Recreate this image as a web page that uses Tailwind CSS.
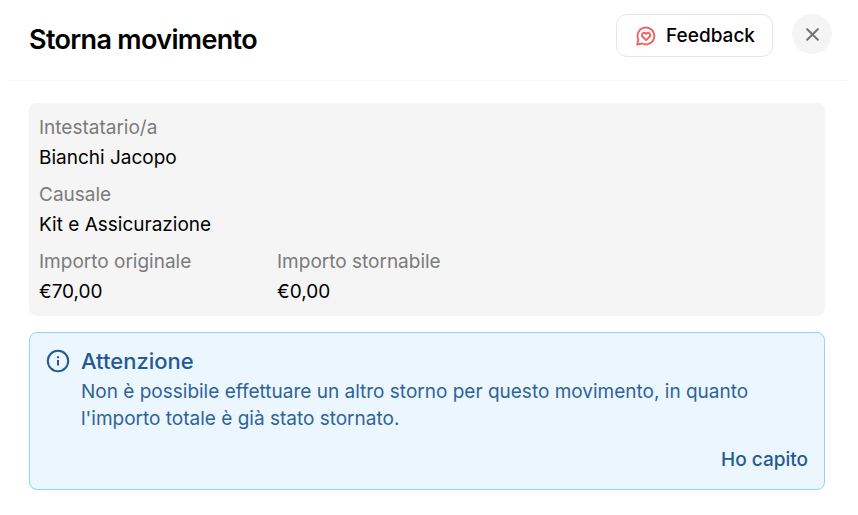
<!DOCTYPE html>
<html lang="it">
<head>
  <meta charset="UTF-8" />
  <title>Storna movimento</title>
  <meta name="viewport" content="width=device-width, initial-scale=1.0" />
  <script src="https://cdn.jsdelivr.net/npm/@tailwindcss/browser@4"></script>
</head>
<body class="bg-white text-black font-['Inter',sans-serif] text-[19px] leading-[27px]">

<main role="dialog" aria-labelledby="dialogTitle">
  <!-- Header -->
  <header class="mr-[11px] ml-2 flex h-[81px] items-start justify-between border-b border-neutral-100 pt-3.5 pr-[15px] pl-[21px]">
    <h1 id="dialogTitle" class="pt-2 text-[27px] leading-[36px] font-semibold tracking-tight">Storna movimento</h1>
    <div class="flex items-start gap-[19px]">
      <button type="button" class="flex h-[43px] items-center gap-[10px] rounded-[11px] border border-neutral-200 pr-[17px] pl-[19px] font-medium">
        <svg class="size-5 text-[#ee6363]" viewBox="0 0 20 20" fill="none" stroke="currentColor" stroke-width="1.9" stroke-linecap="round" stroke-linejoin="round" aria-hidden="true">
          <path d="M1.2 18.7l1.2-5A8.4 8.4 0 1 1 6.2 17.5z" />
          <path d="M10.1 14.1L6.6 10.7a2.2 2.2 0 0 1 3.1-3.2l.4.4.4-.4a2.2 2.2 0 0 1 3.1 3.2z" />
        </svg>
        Feedback
      </button>
      <button type="button" aria-label="Chiudi" class="flex size-10 items-center justify-center rounded-full bg-neutral-100 text-[#767676]">
        <svg class="size-[13px]" viewBox="0 0 13 13" fill="none" stroke="currentColor" stroke-width="2.1" stroke-linecap="round" aria-hidden="true">
          <path d="M1.2 1.2l10.6 10.6M11.8 1.2L1.2 11.8" />
        </svg>
      </button>
    </div>
  </header>

  <div class="flex flex-col gap-4 pt-[22px] pr-[33px] pb-6 pl-[29px]">
    <!-- Movement details -->
    <dl class="grid grid-cols-[228px_1fr] gap-2.5 rounded-lg bg-neutral-100 px-2.5 py-[11px]">
      <div class="col-span-2 flex flex-col gap-[3px]">
        <dt class="text-[#7b7b7b]">Intestatario/a</dt>
        <dd>Bianchi Jacopo</dd>
      </div>
      <div class="col-span-2 flex flex-col gap-[3px]">
        <dt class="text-[#7b7b7b]">Causale</dt>
        <dd>Kit e Assicurazione</dd>
      </div>
      <div class="flex flex-col gap-[3px]">
        <dt class="text-[#7b7b7b]">Importo originale</dt>
        <dd>€70,00</dd>
      </div>
      <div class="flex flex-col gap-[3px]">
        <dt class="text-[#7b7b7b]">Importo stornabile</dt>
        <dd>€0,00</dd>
      </div>
    </dl>

    <!-- Warning -->
    <section class="flex gap-[11px] rounded-lg border border-[#8ad4ff] bg-[#ebf6ff] px-4 pt-3.5 pb-4 text-[#245a93]">
      <svg class="mt-0.5 size-6 shrink-0" viewBox="0 0 24 24" fill="none" stroke="currentColor" stroke-width="2" aria-hidden="true">
        <circle cx="12" cy="12" r="10.2" />
        <path d="M12 11v5.5M12 7.2v2" />
      </svg>
      <div class="flex flex-1 flex-col">
        <h2 class="text-[22px] leading-[28px] font-medium">Attenzione</h2>
        <p class="mt-[3px] text-[#2f6398]">Non è possibile effettuare un altro storno per questo movimento, in quanto l'importo totale è già stato stornato.</p>
        <button type="button" class="mt-3.5 self-end font-medium">Ho capito</button>
      </div>
    </section>
  </div>
</main>

</body>
</html>
